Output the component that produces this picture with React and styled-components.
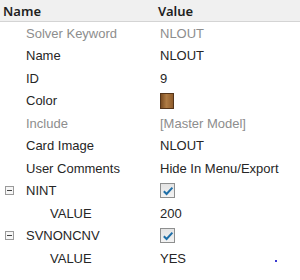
import React from 'react'
import styled, { createGlobalStyle } from 'styled-components'

const Global = createGlobalStyle`
  html, body { margin: 0; padding: 0; background: #fff; }
  body { font-family: "Liberation Sans", Arial, sans-serif; }
`

const Grid = styled.div`
  position: relative;
  width: 300px;
  height: 280px;
  overflow: hidden;
  display: grid;
  grid-template-columns: 150px 150px;
  grid-auto-rows: 22.5px;
  grid-template-rows: 22px;
`

const HeadCell = styled.div`
  background: #f0f0f0;
  border-bottom: 1px solid #d4d4d4;
  display: flex;
  align-items: center;
  padding-left: ${(p) => p.$pad}px;
  font-family: "Noto Sans", "Open Sans", sans-serif;
  font-weight: 600;
  font-size: 13px;
  color: #1e1e1e;
  box-sizing: border-box;
`

const LabelCell = styled.div`
  display: flex;
  align-items: center;
  padding-left: ${(p) => p.$indent}px;
  font-size: 13px;
  color: ${(p) => (p.$dim ? '#8d8d8d' : '#262626')};
  white-space: nowrap;
  position: relative;
`

const ValueCell = styled.div`
  display: flex;
  align-items: center;
  padding-left: 10px;
  font-size: 13px;
  color: ${(p) => (p.$dim ? '#8d8d8d' : '#262626')};
  white-space: nowrap;
`

const Toggle = styled.span`
  position: absolute;
  left: 5px;
  top: 50%;
  margin-top: -5px;
  width: 9px;
  height: 9px;
  box-sizing: border-box;
  border: 1px solid #9a9a9a;
  background: #f6f6f6;
  display: flex;
  align-items: center;
  justify-content: center;
  &::after {
    content: '';
    width: 5px;
    height: 1px;
    background: #444;
  }
`

const Swatch = styled.span`
  width: 14px;
  height: 16px;
  box-sizing: border-box;
  border: 1px solid #55351a;
  background: linear-gradient(90deg, #7a4c22 0%, #b07c44 45%, #8f5c2c 100%);
`

const Check = styled.span`
  width: 15px;
  height: 15px;
  box-sizing: border-box;
  border: 1px solid #8e8f8f;
  background: linear-gradient(#e3e3e3, #f3f3f3);
  display: flex;
  align-items: center;
  justify-content: center;
`

const Dot = styled.span`
  position: absolute;
  left: 275px;
  top: 260px;
  width: 2px;
  height: 2px;
  background: #3a3ad0;
`

const CheckMark = () => (
  <Check>
    <svg width="12" height="12" viewBox="0 0 12 12">
      <path d="M1.8 6.2 L4.6 9 L10.4 2.6" fill="none" stroke="#1f6fa8" strokeWidth="2" />
    </svg>
  </Check>
)

const rows = [
  { label: 'Solver Keyword', value: 'NLOUT', dim: true },
  { label: 'Name', value: 'NLOUT' },
  { label: 'ID', value: '9' },
  { label: 'Color', kind: 'swatch' },
  { label: 'Include', value: '[Master Model]', dim: true },
  { label: 'Card Image', value: 'NLOUT' },
  { label: 'User Comments', value: 'Hide In Menu/Export' },
  { label: 'NINT', kind: 'check', group: true },
  { label: 'VALUE', value: '200', child: true },
  { label: 'SVNONCNV', kind: 'check', group: true },
  { label: 'VALUE', value: 'YES', child: true },
]

export default function App() {
  return (
    <>
      <Global />
      <Grid>
        <HeadCell $pad={3}>Name</HeadCell>
        <HeadCell $pad={8}>Value</HeadCell>
        {rows.map((r, i) => (
          <React.Fragment key={i}>
            <LabelCell $dim={r.dim} $indent={r.child ? 50 : 26}>
              {r.group && <Toggle />}
              {r.label}
            </LabelCell>
            <ValueCell $dim={r.dim}>
              {r.kind === 'swatch' && <Swatch />}
              {r.kind === 'check' && <CheckMark />}
              {r.value}
            </ValueCell>
          </React.Fragment>
        ))}
        <Dot />
      </Grid>
    </>
  )
}
